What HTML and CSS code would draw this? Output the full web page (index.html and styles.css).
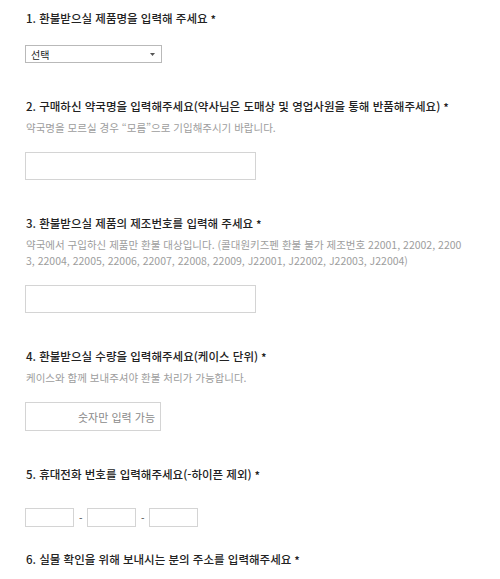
FILE: index.html
```html
<!DOCTYPE html>
<html lang="ko">
<head>
    <meta charset="UTF-8">
    <meta name="viewport" content="width=device-width, initial-scale=1.0">
    <title>환불 신청</title>
    <link rel="stylesheet" href="styles.css">
</head>
<body>
    <form class="form">
        <div class="question">
            <div class="q-title">1. 환불받으실 제품명을 입력해 주세요 <span class="req">*</span></div>
            <div class="select">
                <span>선택</span>
                <svg class="arrow" width="5" height="3" viewBox="0 0 5 3"><path d="M0 0h5L2.5 3z" fill="#555"/></svg>
            </div>
        </div>

        <div class="question">
            <div class="q-title">2. 구매하신 약국명을 입력해주세요(약사님은 도매상 및 영업사원을 통해 반품해주세요) <span class="req">*</span></div>
            <div class="q-desc">약국명을 모르실 경우 “모름”으로 기입해주시기 바랍니다.</div>
            <input class="field wide" type="text">
        </div>

        <div class="question">
            <div class="q-title">3. 환불받으실 제품의 제조번호를 입력해 주세요 <span class="req">*</span></div>
            <div class="q-desc">약국에서 구입하신 제품만 환불 대상입니다. (콜대원키즈펜 환불 불가 제조번호 22001, 22002, 22003, 22004, 22005, 22006, 22007, 22008, 22009, J22001, J22002, J22003, J22004)</div>
            <input class="field wide" type="text">
        </div>

        <div class="question">
            <div class="q-title">4. 환불받으실 수량을 입력해주세요(케이스 단위) <span class="req">*</span></div>
            <div class="q-desc">케이스와 함께 보내주셔야 환불 처리가 가능합니다.</div>
            <input class="field count" type="text" placeholder="숫자만 입력 가능">
        </div>

        <div class="question q-phone">
            <div class="q-title">5. 휴대전화 번호를 입력해주세요(-하이픈 제외) <span class="req">*</span></div>
            <div class="phone">
                <input class="field tel" type="text">
                <span class="dash">-</span>
                <input class="field tel" type="text">
                <span class="dash">-</span>
                <input class="field tel" type="text">
            </div>
        </div>

        <div class="question">
            <div class="q-title">6. 실물 확인을 위해 보내시는 분의 주소를 입력해주세요 <span class="req">*</span></div>
        </div>
    </form>
</body>
</html>
```

FILE: styles.css
```css
body {
    margin: 0;
    background-color: #fff;
    font-family: "Noto Sans CJK KR", "Noto Sans", sans-serif;
    color: #222;
}
.form {
    width: 445px;
    padding: 8px 0 0 25px;
}
.question {
    margin-bottom: 33px;
}
.q-phone {
    margin-bottom: 22px;
}
.q-title {
    font-size: 11.5px;
    line-height: 20px;
    font-weight: 500;
    padding-left: 1px;
}
.req {
    font-size: 10px;
    font-weight: bold;
}
.q-desc {
    margin-top: 3px;
    font-size: 10.5px;
    line-height: 16px;
    color: #9d9d9d;
    word-break: break-all;
    padding-left: 1px;
}
.select {
    margin-top: 16px;
    box-sizing: border-box;
    width: 137px;
    height: 18px;
    border: 1px solid #b9b9b9;
    display: flex;
    align-items: center;
    justify-content: space-between;
    padding: 0 6px 0 5px;
    font-size: 10px;
}
.arrow {
    display: block;
}
.field {
    display: block;
    box-sizing: border-box;
    margin: 16px 0 0 0;
    padding: 0 5px;
    border: 1px solid #d4d4d4;
    background-color: #fff;
    font-family: inherit;
    font-size: 11px;
    outline: none;
}
.wide {
    width: 231px;
    height: 28px;
}
.count {
    width: 136px;
    height: 29px;
    text-align: right;
}
.count::placeholder {
    color: #8a8a8a;
}
.phone {
    display: flex;
    align-items: center;
    gap: 5px;
    margin-top: 23px;
}
.tel {
    margin: 0;
    width: 49px;
    height: 19px;
}
.dash {
    font-size: 10px;
    color: #444;
    width: 3px;
}
```
